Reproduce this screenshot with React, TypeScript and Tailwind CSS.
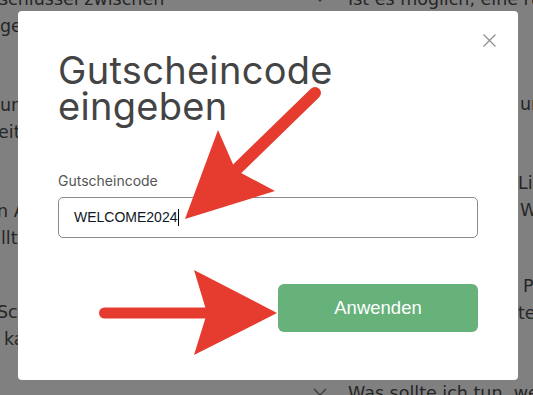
import React from "react";

const Chevron = () => (
  <svg width="14" height="8" viewBox="0 0 14 8" className="shrink-0 mt-[8px]">
    <path d="M1 1 L7 7 L13 1" fill="none" stroke="#3a3a3a" strokeWidth="1.3" />
  </svg>
);

const Line = ({ hidden, frag, w }: { hidden: string; frag: string; w: string }) => (
  <div className="flex h-[27px] whitespace-nowrap">
    <span className={w}>{hidden}</span>
    <span>{frag}</span>
  </div>
);

export default function App() {
  return (
    <div
      className="relative w-[533px] h-[395px] overflow-hidden bg-[#808080] text-[#262626]"
      style={{ fontFamily: "Inter, 'Noto Sans', sans-serif" }}
    >
      {/* background page (dimmed) */}
      <div
        className="flex text-[17.5px] leading-[27px] mt-[-14px]"
        style={{ fontFamily: "'DejaVu Sans', sans-serif" }}
      >
        <div className="w-[313px] shrink-0 flex flex-col">
          <div className="flex flex-col">
            <div className="whitespace-nowrap ml-[-1px]">schlüssel zwischen</div>
            <div className="whitespace-nowrap">geräten übertragen?</div>
          </div>
          <div className="flex flex-col mt-[52px]">
            <div className="whitespace-nowrap">ur Verfügung?</div>
            <div className="whitespace-nowrap ml-[-2px]">eit erhalten</div>
          </div>
          <div className="flex flex-col mt-[52px]">
            <div className="whitespace-nowrap ml-[-3px]">n Abo kündigen?</div>
            <div className="whitespace-nowrap ml-[1px]">llte ich tun?</div>
          </div>
          <div className="flex flex-col mt-[47px]">
            <div className="whitespace-nowrap ml-[-3px]">Schlüssel nicht</div>
            <div className="whitespace-nowrap ml-[4px]">kann ich tun?</div>
          </div>
        </div>
        <div className="flex flex-col">
          <div className="flex gap-[21px]">
            <Chevron />
            <div className="whitespace-nowrap">Ist es möglich, eine rückgängig</div>
          </div>
          <div className="flex gap-[21px] mt-[51px]">
            <Chevron />
            <div className="flex flex-col">
              <div className="whitespace-nowrap">Wie lange dauert</div>
              <Line w="inline-block w-[172px] overflow-hidden" hidden="bis ich den Code" frag="und" />
            </div>
          </div>
          <div className="flex gap-[21px] mt-[52px]">
            <Chevron />
            <div className="flex flex-col">
              <Line w="inline-block w-[170px] overflow-hidden" hidden="Wie nutze ich" frag="Lizenz" />
              <Line w="inline-block w-[172px] overflow-hidden" hidden="nach dem Kauf" frag="Wann" />
            </div>
          </div>
          <div className="flex gap-[21px] mt-[49px]">
            <Chevron />
            <div className="flex flex-col">
              <Line w="inline-block w-[175px] overflow-hidden" hidden="Welche Zahlung" frag="PayPal" />
              <Line w="inline-block w-[170px] overflow-hidden" hidden="werden akzeptiert" frag="ten" />
            </div>
          </div>
          <div className="flex gap-[21px] mt-[53px]">
            <Chevron />
            <div className="whitespace-nowrap">Was sollte ich tun, wenn</div>
          </div>
        </div>
      </div>

      {/* modal */}
      <div className="absolute left-[18px] top-[11px] w-[500px] h-[369px] bg-white rounded-[4px] px-[40px] pt-[41px] flex flex-col">
        <button className="absolute right-[22px] top-[22px] w-[14px] h-[14px] flex items-center justify-center">
          <svg width="13" height="13" viewBox="0 0 13 13">
            <path d="M0.5 0.5 L12.5 12.5 M12.5 0.5 L0.5 12.5" stroke="#8c8c8c" strokeWidth="1.1" />
          </svg>
        </button>
        <h2 className="text-[38px] leading-[36px] text-[#444444] font-normal tracking-[0.3px]">
          Gutscheincode
          <br />
          eingeben
        </h2>
        <label className="mt-[47px] text-[14px] leading-[20px] text-[#555555]">Gutscheincode</label>
        <div className="mt-[6px] h-[41px] border border-[#8a8a8a] rounded-[5px] flex items-center px-[15px]">
          <span
            className="text-[14px] text-[#0d1826]"
            style={{ fontFamily: "'Liberation Sans', Arial, sans-serif" }}
          >
            WELCOME2024
          </span>
          <span className="w-[1px] h-[17px] bg-black ml-[1px]" />
        </div>
        <div className="mt-[46px] flex justify-end">
          <button
            className="w-[200px] h-[48px] rounded-[6px] bg-[#66b27a] text-white text-[18.5px] flex items-center justify-center"
            style={{ fontFamily: "'Liberation Sans', Arial, sans-serif" }}
          >
            Anwenden
          </button>
        </div>
      </div>

      {/* annotation arrows */}
      <svg className="absolute left-0 top-0 pointer-events-none" width="533" height="395" viewBox="0 0 533 395">
        <line x1="315" y1="93" x2="238" y2="168" stroke="#e63c30" strokeWidth="12" strokeLinecap="round" />
        <polygon points="185,219 218,130 235.5,170 275,191" fill="#e63c30" />
        <line x1="104.5" y1="313" x2="210" y2="313" stroke="#e63c30" strokeWidth="11" strokeLinecap="round" />
        <polygon points="277,313 194,270 207,313 194,355" fill="#e63c30" />
      </svg>
    </div>
  );
}
